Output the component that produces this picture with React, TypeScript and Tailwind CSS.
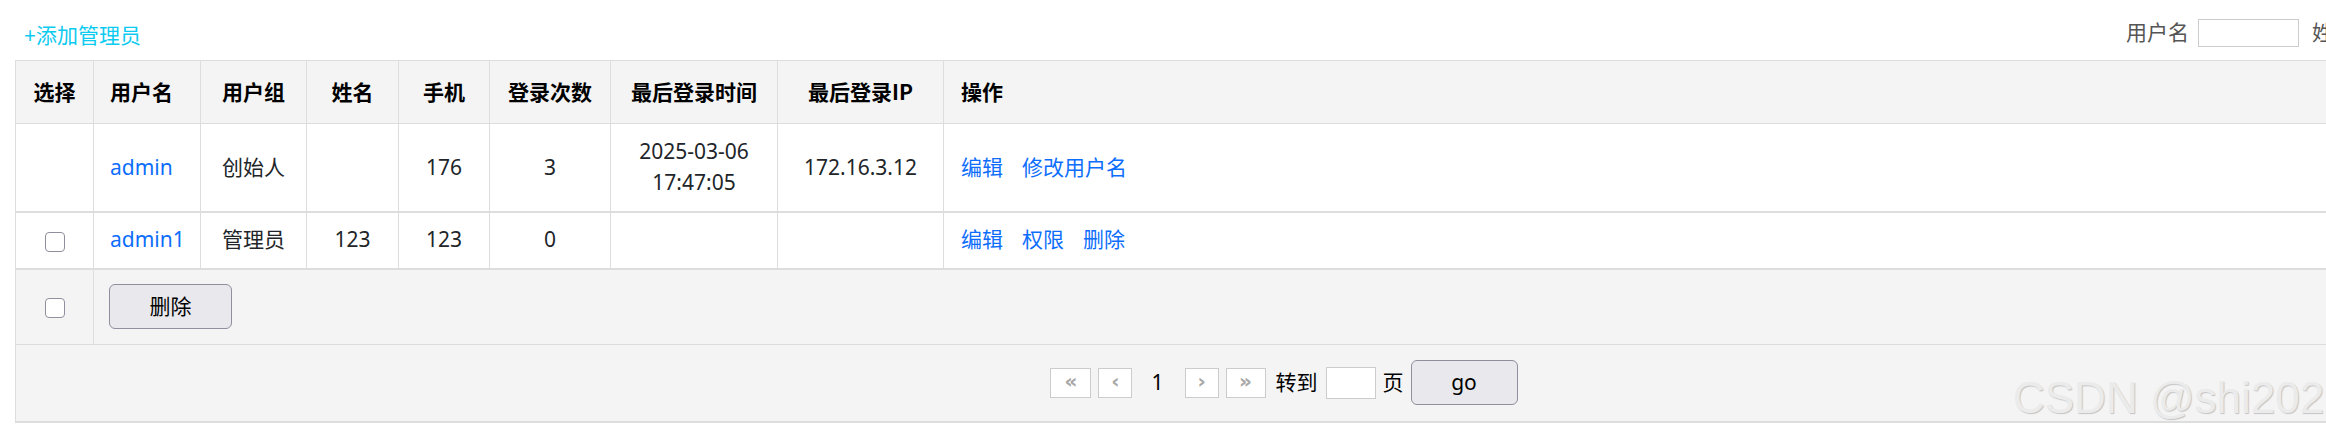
import React from "react";

const colWidths = [78, 107, 106, 92, 91, 121, 167, 166];

type Admin = {
  id: number;
  username: string;
  group: string;
  name: string;
  phone: string;
  logins: number;
  lastTime: string;
  lastIp: string;
  actions: string[];
  selectable: boolean;
};

const admins: Admin[] = [
  {
    id: 1,
    username: "admin",
    group: "创始人",
    name: "",
    phone: "176",
    logins: 3,
    lastTime: "2025-03-06 17:47:05",
    lastIp: "172.16.3.12",
    actions: ["编辑", "修改用户名"],
    selectable: false,
  },
  {
    id: 2,
    username: "admin1",
    group: "管理员",
    name: "123",
    phone: "123",
    logins: 0,
    lastTime: "",
    lastIp: "",
    actions: ["编辑", "权限", "删除"],
    selectable: true,
  },
];

function Checkbox() {
  return (
    <span className="inline-block h-[20px] w-[20px] rounded-[4px] border-[1.5px] border-[#8f8f9d] bg-white align-middle" />
  );
}

function PageBox({ label, w }: { label: string; w: string }) {
  return (
    <span className={`flex h-[30px] ${w} items-center justify-center border border-[#cccccc] bg-white pb-[3px] font-['DejaVu_Sans',sans-serif] text-[20px] font-bold leading-none text-[#a8a8a8]`}>
      {label}
    </span>
  );
}

export default function App() {
  const th = "border border-[#dddddd] bg-[#f4f4f4] font-['Noto_Sans_CJK_SC',sans-serif] font-bold text-black";
  const td = "border-x border-b-2 border-[#dddddd] text-center";

  return (
    <div className="relative h-[439px] w-[2326px] overflow-hidden bg-white font-['Noto_Sans','Noto_Sans_CJK_SC',sans-serif] text-[21px] text-[#212529]">
      <div className="w-[2562px] px-[15px]">
        <div className="flex h-[60px] items-center pt-[6px]">
          <a href="#" className="ml-[9px] mt-[5px] text-[#0dcaf0]">
            +添加管理员
          </a>
          <div className="flex-1" />
          <div className="flex w-[421px] items-center text-[#555555]">
            <span>用户名</span>
            <input className="ml-[9px] h-[28px] w-[101px] border border-[#cccccc]" />
            <span className="ml-[13px]">姓名</span>
            <input className="ml-[9px] h-[28px] w-[101px] border border-[#cccccc]" />
          </div>
        </div>

        <table className="w-full table-fixed border-collapse border-b-2 border-[#dddddd]">
          <colgroup>
            {colWidths.map((w, i) => (
              <col key={i} style={{ width: w }} />
            ))}
            <col />
          </colgroup>
          <thead>
            <tr className="h-[63px]">
              <th className={`${th} text-center`}>选择</th>
              <th className={`${th} pl-[16px] text-left`}>用户名</th>
              <th className={`${th} text-center`}>用户组</th>
              <th className={`${th} text-center`}>姓名</th>
              <th className={`${th} text-center`}>手机</th>
              <th className={`${th} text-center`}>登录次数</th>
              <th className={`${th} text-center`}>最后登录时间</th>
              <th className={`${th} text-center`}>最后登录IP</th>
              <th className={`${th} pl-[17px] text-left`}>操作</th>
            </tr>
          </thead>
          <tbody>
            {admins.map((a) => (
              <tr key={a.id} className={a.lastTime ? "h-[88px]" : "h-[57px]"}>
                <td className={td}>{a.selectable && <Checkbox />}</td>
                <td className={`${td} pl-[16px] !text-left`}>
                  <a href="#" className="text-[#0d6efd]">{a.username}</a>
                </td>
                <td className={td}>{a.group}</td>
                <td className={td}>{a.name}</td>
                <td className={td}>{a.phone}</td>
                <td className={td}>{a.logins}</td>
                <td className={`${td} px-[16px] leading-[31px]`}>{a.lastTime}</td>
                <td className={td}>{a.lastIp}</td>
                <td className={`${td} pl-[17px] !text-left`}>
                  <div className="flex gap-[19px]">
                    {a.actions.map((x) => (
                      <a key={x} href="#" className="text-[#0d6efd]">{x}</a>
                    ))}
                  </div>
                </td>
              </tr>
            ))}
            <tr className="h-[76px] bg-[#f4f4f4]">
              <td className="border-x border-b border-[#dddddd] text-center">
                <Checkbox />
              </td>
              <td colSpan={8} className="border-x border-b border-[#dddddd] pl-[15px]">
                <button className="h-[45px] w-[123px] rounded-[6px] border border-[#8f8f9d] bg-[#e9e9ed] text-black">
                  删除
                </button>
              </td>
            </tr>
            <tr className="h-[77px] bg-[#f4f4f4]">
              <td colSpan={9} className="border-x border-[#dddddd]">
                <div className="ml-[6px] flex items-center justify-center text-black">
                  <PageBox label="«" w="w-[41px]" />
                  <span className="ml-[7px]"><PageBox label="‹" w="w-[34px]" /></span>
                  <span className="ml-[19px]">1</span>
                  <span className="ml-[21px]"><PageBox label="›" w="w-[34px]" /></span>
                  <span className="ml-[7px]"><PageBox label="»" w="w-[40px]" /></span>
                  <span className="ml-[10px]">转到</span>
                  <input className="ml-[8px] h-[32px] w-[50px] border border-[#cccccc] bg-white" />
                  <span className="ml-[7px]">页</span>
                  <button className="ml-[7px] h-[45px] w-[107px] rounded-[6px] border border-[#8f8f9d] bg-[#e9e9ed]">
                    go
                  </button>
                </div>
              </td>
            </tr>
          </tbody>
        </table>
      </div>

      <div className="absolute left-[2013px] top-[376px] whitespace-nowrap font-['Liberation_Sans',sans-serif] text-[44px] leading-none text-[#ebebeb] [text-shadow:1px_1px_1px_rgba(0,0,0,0.2)]">
        CSDN @shi202
      </div>
    </div>
  );
}
